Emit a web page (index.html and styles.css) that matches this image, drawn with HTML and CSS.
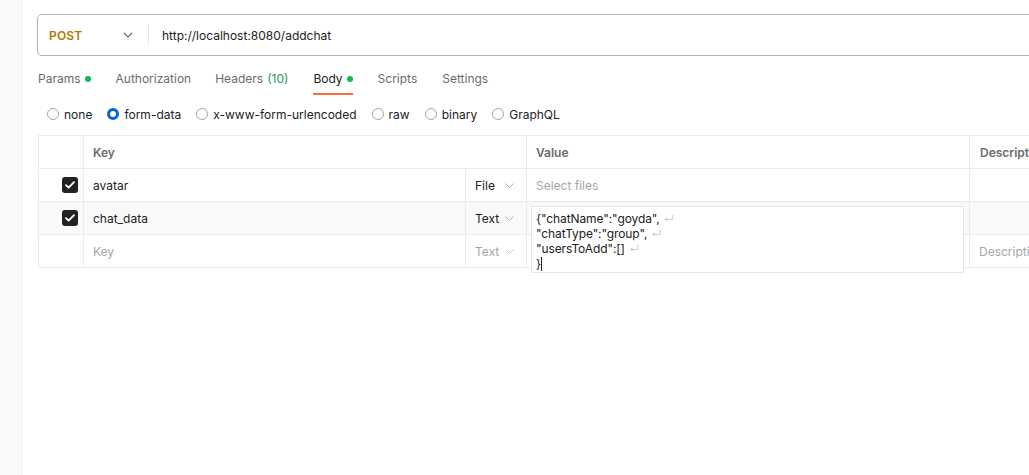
FILE: index.html
```html
<!DOCTYPE html>
<html>
<head>
<meta charset="utf-8">
<link rel="stylesheet" href="styles.css">
</head>
<body>
<div class="app">
  <aside class="gutter"></aside>
  <main class="main">
    <div class="urlbar">
      <div class="method">
        <span class="method-name">POST</span>
        <svg class="chev" width="10" height="6" viewBox="0 0 10 6"><path d="M1 1l4 4 4-4" fill="none" stroke="#6b6b6b" stroke-width="1.2"/></svg>
      </div>
      <div class="divider"></div>
      <div class="url">http://localhost:8080/addchat</div>
    </div>

    <nav class="tabs">
      <div class="tab">Params<span class="dot"></span></div>
      <div class="tab">Authorization</div>
      <div class="tab">Headers <span class="count">(10)</span></div>
      <div class="tab active">Body<span class="dot"></span></div>
      <div class="tab">Scripts</div>
      <div class="tab">Settings</div>
    </nav>

    <div class="radios">
      <label class="radio"><span class="circle"></span>none</label>
      <label class="radio"><span class="circle on"></span>form-data</label>
      <label class="radio"><span class="circle"></span>x-www-form-urlencoded</label>
      <label class="radio"><span class="circle"></span>raw</label>
      <label class="radio"><span class="circle"></span>binary</label>
      <label class="radio"><span class="circle"></span>GraphQL</label>
    </div>

    <div class="table">
      <div class="cell chk"></div>
      <div class="cell head keyhead">Key</div>
      <div class="cell head">Value</div>
      <div class="cell head deschead">Description</div>

      <div class="cell chk"><span class="checkbox"><svg width="10" height="8" viewBox="0 0 10 8"><path d="M1 4.2l2.6 2.5L9 1.2" fill="none" stroke="#fff" stroke-width="1.8" stroke-linecap="round" stroke-linejoin="round"/></svg></span></div>
      <div class="cell">avatar</div>
      <div class="cell type">File<svg class="tchev" width="9" height="5" viewBox="0 0 9 5"><path d="M0.5 0.5l4 4 4-4" fill="none" stroke="#b0b0b0" stroke-width="1"/></svg></div>
      <div class="cell placeholder">Select files</div>
      <div class="cell"></div>

      <div class="cell chk alt"><span class="checkbox"><svg width="10" height="8" viewBox="0 0 10 8"><path d="M1 4.2l2.6 2.5L9 1.2" fill="none" stroke="#fff" stroke-width="1.8" stroke-linecap="round" stroke-linejoin="round"/></svg></span></div>
      <div class="cell alt">chat_data</div>
      <div class="cell type alt">Text<svg class="tchev" width="9" height="5" viewBox="0 0 9 5"><path d="M0.5 0.5l4 4 4-4" fill="none" stroke="#b0b0b0" stroke-width="1"/></svg></div>
      <div class="cell alt valuecell">
        <div class="editor">
          <div class="line">{"chatName":"goyda", <span class="ret">↵</span></div>
          <div class="line">"chatType":"group", <span class="ret">↵</span></div>
          <div class="line">"usersToAdd":[] <span class="ret">↵</span></div>
          <div class="line">}<span class="caret"></span></div>
        </div>
      </div>
      <div class="cell alt"></div>

      <div class="cell chk"></div>
      <div class="cell placeholder">Key</div>
      <div class="cell type placeholder">Text<svg class="tchev" width="9" height="5" viewBox="0 0 9 5"><path d="M0.5 0.5l4 4 4-4" fill="none" stroke="#c8c8c8" stroke-width="1"/></svg></div>
      <div class="cell"></div>
      <div class="cell placeholder">Description</div>
    </div>
  </main>
</div>
</body>
</html>
```

FILE: styles.css
```css
html, body {
  margin: 0;
  padding: 0;
  background: #ffffff;
  overflow: hidden;
}

body {
  font-family: Inter, "Noto Sans", sans-serif;
  color: #212121;
  width: 1029px;
  height: 475px;
}

.app {
  display: flex;
  height: 475px;
}

.gutter {
  width: 21px;
  flex: none;
  background: #f9f9f9;
  border-right: 1px solid #ededed;
}

.main {
  flex: none;
  width: 1200px;
  padding-left: 15px;
}

.urlbar {
  margin-top: 14px;
  height: 40px;
  width: 1100px;
  border: 1px solid #b3b3b3;
  border-radius: 5px;
  display: flex;
  align-items: center;
}

.method {
  width: 110px;
  display: flex;
  align-items: center;
  padding-left: 11px;
  box-sizing: border-box;
}

.method-name {
  font-size: 12px;
  font-weight: 600;
  color: #ad7a03;
  letter-spacing: 0.2px;
}

.chev {
  margin-left: 40px;
}

.divider {
  width: 1px;
  height: 20px;
  background: #e6e6e6;
}

.url {
  padding-left: 13px;
  font-size: 12px;
  color: #212121;
}

.tabs {
  display: flex;
  gap: 25px;
  margin-top: 8px;
  padding-left: 1px;
}

.tab {
  font-size: 12px;
  line-height: 16px;
  color: #6b6b6b;
  padding: 7px 0 6px;
  border-bottom: 2px solid transparent;
  display: flex;
  align-items: center;
}

.tab:nth-child(3) {
  margin-left: -1px;
}

.tab.active {
  color: #212121;
  border-bottom-color: #ff6c37;
}

.tab .dot {
  width: 6px;
  height: 6px;
  border-radius: 50%;
  background: #0cbb52;
  margin-left: 4px;
}

.tab .count {
  color: #1a9a5c;
  margin-left: 4px;
}

.radios {
  display: flex;
  gap: 15px;
  margin-top: 9px;
  padding-left: 10px;
  height: 20px;
  align-items: center;
}

.radio {
  display: flex;
  align-items: center;
  font-size: 12px;
  color: #212121;
}

.circle {
  width: 10px;
  height: 10px;
  border: 1px solid #a6a6a6;
  border-radius: 50%;
  margin-right: 5px;
  background: #fff;
}

.circle.on {
  width: 6px;
  height: 6px;
  border: 3px solid #0265d2;
}

.table {
  margin-top: 11px;
  margin-left: 1px;
  display: grid;
  grid-template-columns: 45px 382px 61px 443px 200px;
  grid-auto-rows: 33px;
  border-top: 1px solid #ebebeb;
  border-left: 1px solid #ebebeb;
  width: max-content;
}

.cell {
  border-right: 1px solid #ebebeb;
  border-bottom: 1px solid #ebebeb;
  display: flex;
  align-items: center;
  padding-left: 9px;
  font-size: 12px;
  color: #212121;
  box-sizing: border-box;
  white-space: nowrap;
  overflow: hidden;
}

.cell.head {
  font-weight: 600;
  color: #6b6b6b;
}

.cell.keyhead {
  grid-column: span 2;
}

.cell.deschead {
  padding-left: 10px;
}

.cell.chk {
  justify-content: flex-end;
  padding-left: 0;
  padding-right: 5px;
}

.cell.alt {
  background: #f9f9f9;
}

.cell.placeholder {
  color: #a6a6a6;
}

.cell.type {
  justify-content: space-between;
  padding-right: 12px;
}

.checkbox {
  width: 16px;
  height: 16px;
  border-radius: 3px;
  background: #212121;
  display: flex;
  align-items: center;
  justify-content: center;
}

.valuecell {
  position: relative;
  overflow: visible;
}

.editor {
  position: absolute;
  left: 4px;
  top: 4px;
  width: 433px;
  height: 67px;
  box-sizing: border-box;
  background: #ffffff;
  border: 1px solid #e6e6e6;
  padding: 3.5px 0 0 4px;
  font-size: 12px;
  color: #212121;
  z-index: 2;
  letter-spacing: -0.1px;
}

.line {
  height: 15.33px;
  line-height: 15.33px;
  white-space: nowrap;
}

.ret {
  color: #c4c4c4;
  font-size: 10px;
  line-height: 10px;
  margin-left: 1px;
}

.caret {
  display: inline-block;
  width: 1px;
  height: 14px;
  background: #212121;
  vertical-align: -3px;
}
```
